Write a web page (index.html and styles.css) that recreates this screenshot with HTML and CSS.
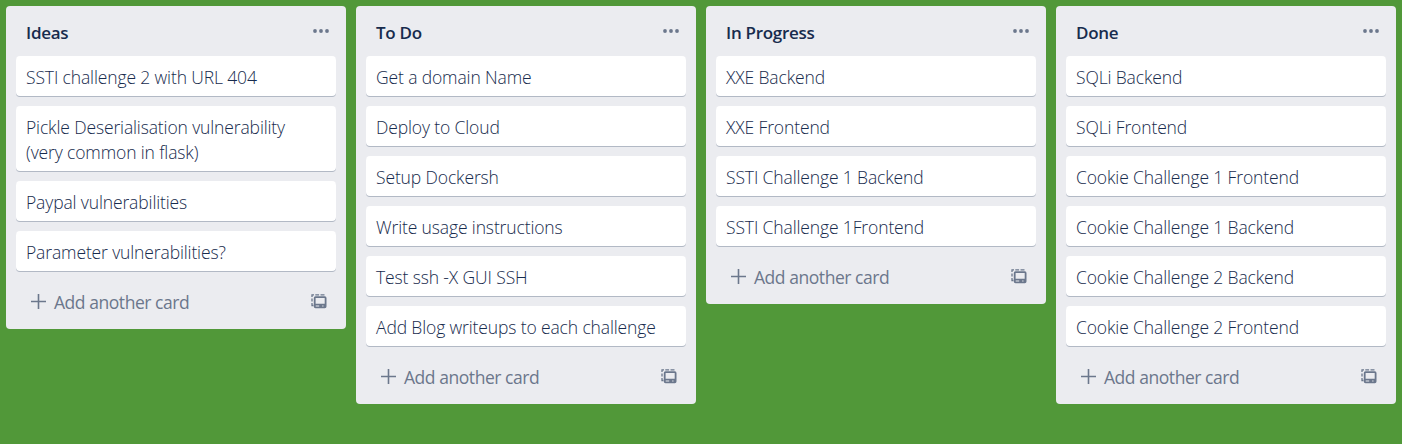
FILE: index.html
```html
<!DOCTYPE html>
<html lang="en">
<head>
<meta charset="utf-8">
<title>Board</title>
<link rel="stylesheet" href="styles.css">
</head>
<body>
<svg class="sprite" aria-hidden="true">
  <symbol id="more" viewBox="0 0 16 6"><circle cx="2" cy="3" r="1.9"/><circle cx="8" cy="3" r="1.9"/><circle cx="14" cy="3" r="1.9"/></symbol>
  <symbol id="plus" viewBox="0 0 15 15"><path d="M6.7 0h1.6v6.7H15v1.6H8.3V15H6.7V8.3H0V6.7h6.7z"/></symbol>
  <symbol id="template" viewBox="0 0 16 15">
    <path d="M1 3V.9h2M4.300 .9h3.800M9.500 .9H13.500M1 4.500v3M1 9v2.500h1.500" fill="none" stroke="currentColor" stroke-width="1.300"/>
    <path fill-rule="evenodd" d="M4.500 2.300h9.300q1.700 0 1.700 1.700v8.500q0 1.700-1.700 1.700H4.500Q2.800 14.200 2.800 12.500V4q0-1.700 1.700-1.700zM4.600 4v5.700h9.100V4zM4.700 11.400v1h3.500v-1zM11.200 11.400v1h1.300v-1z"/>
  </symbol>
</svg>
<main class="board">
  <section class="list">
    <header class="list-header"><h2>Ideas</h2><svg class="more"><use href="#more"/></svg></header>
    <div class="cards">
      <article class="card">SSTI challenge 2 with URL 404</article>
      <article class="card">Pickle Deserialisation vulnerability<br>(very common in flask)</article>
      <article class="card">Paypal vulnerabilities</article>
      <article class="card">Parameter vulnerabilities?</article>
    </div>
    <footer class="list-footer"><svg class="plus"><use href="#plus"/></svg><span>Add another card</span><svg class="template"><use href="#template"/></svg></footer>
  </section>
  <section class="list">
    <header class="list-header"><h2>To Do</h2><svg class="more"><use href="#more"/></svg></header>
    <div class="cards">
      <article class="card">Get a domain Name</article>
      <article class="card">Deploy to Cloud</article>
      <article class="card">Setup Dockersh</article>
      <article class="card">Write usage instructions</article>
      <article class="card">Test ssh -X GUI SSH</article>
      <article class="card">Add Blog writeups to each challenge</article>
    </div>
    <footer class="list-footer"><svg class="plus"><use href="#plus"/></svg><span>Add another card</span><svg class="template"><use href="#template"/></svg></footer>
  </section>
  <section class="list">
    <header class="list-header"><h2>In Progress</h2><svg class="more"><use href="#more"/></svg></header>
    <div class="cards">
      <article class="card">XXE Backend</article>
      <article class="card">XXE Frontend</article>
      <article class="card">SSTI Challenge 1 Backend</article>
      <article class="card">SSTI Challenge 1Frontend</article>
    </div>
    <footer class="list-footer"><svg class="plus"><use href="#plus"/></svg><span>Add another card</span><svg class="template"><use href="#template"/></svg></footer>
  </section>
  <section class="list">
    <header class="list-header"><h2>Done</h2><svg class="more"><use href="#more"/></svg></header>
    <div class="cards">
      <article class="card">SQLi Backend</article>
      <article class="card">SQLi Frontend</article>
      <article class="card">Cookie Challenge 1 Frontend</article>
      <article class="card">Cookie Challenge 1 Backend</article>
      <article class="card">Cookie Challenge 2 Backend</article>
      <article class="card">Cookie Challenge 2 Frontend</article>
    </div>
    <footer class="list-footer"><svg class="plus"><use href="#plus"/></svg><span>Add another card</span><svg class="template"><use href="#template"/></svg></footer>
  </section>
</main>
</body>
</html>
```
FILE: styles.css
```css
* { box-sizing: border-box; }
body {
  margin: 0;
  height: 444px;
  overflow: hidden;
  background: #519839;
  color: #172b4d;
  font-family: "Open Sans", "Noto Sans", sans-serif;
  font-size: 17.5px;
  font-weight: 350;
  line-height: 25px;
  letter-spacing: -0.13px;
}
.sprite { display: none; }
.board { display: flex; align-items: flex-start; gap: 10px; padding: 6px; }
.list { flex: 0 0 340px; padding: 0 10px; border-radius: 4px; background: #ebecf0; }
.list-header { display: flex; height: 50px; padding: 14px 7px 0 10px; justify-content: space-between; }
.list-header h2 { margin: 0; font-size: 17px; font-weight: 600; line-height: 25px; letter-spacing: -0.3px; }
.more { width: 16px; height: 6px; margin-top: 8px; fill: #6b778c; }
.cards { display: flex; flex-direction: column; gap: 10px; }
.card {
  padding: 9px 10px 6px;
  border-radius: 4px;
  background: #fff;
  box-shadow: 0 1px 0 rgba(9, 30, 66, 0.25);
  white-space: nowrap;
}
.list-footer { display: flex; height: 58px; padding: 19px 9px 0 15px; color: #6b778c; fill: currentColor; font-weight: 400; letter-spacing: -0.45px; }
.plus { width: 15px; height: 15px; margin: 4px 8px 0 0; }
.template { width: 16px; height: 15px; margin: 4px 0 0 auto; }
```
